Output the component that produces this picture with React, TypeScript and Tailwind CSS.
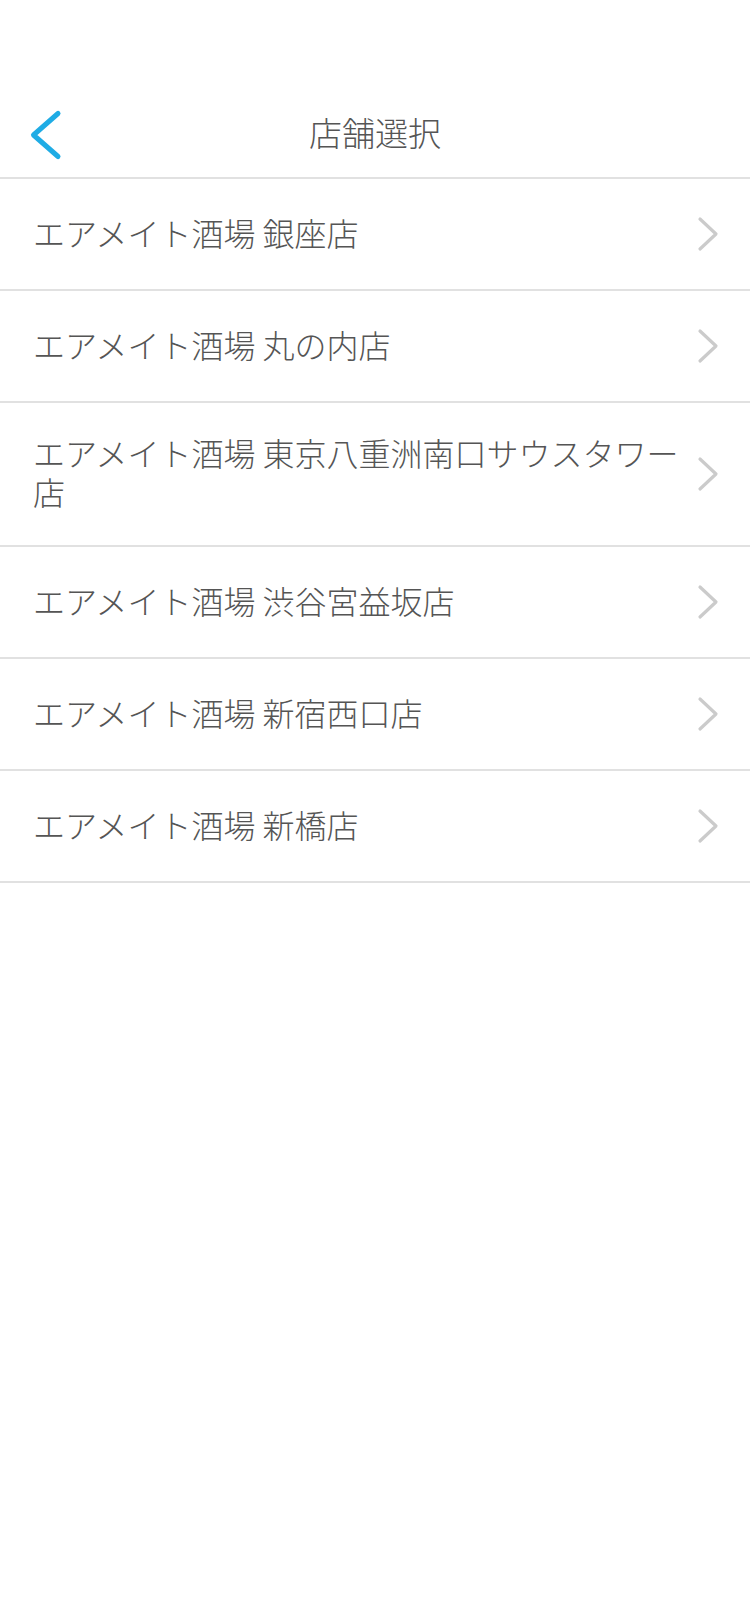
import React from "react";

const stores = [
  "エアメイト酒場 銀座店",
  "エアメイト酒場 丸の内店",
  "エアメイト酒場 東京八重洲南口サウスタワー店",
  "エアメイト酒場 渋谷宮益坂店",
  "エアメイト酒場 新宿西口店",
  "エアメイト酒場 新橋店",
];

function BackIcon() {
  return (
    <svg width="40" height="52" viewBox="0 0 40 52" fill="none">
      <path
        d="M31 4.5 L6.5 26 L31 47.5"
        stroke="#1FACE5"
        strokeWidth={5}
        strokeLinecap="round"
        strokeLinejoin="round"
      />
    </svg>
  );
}

function ChevronIcon() {
  return (
    <svg width="24" height="36" viewBox="0 0 24 36" fill="none">
      <path
        d="M4 3 L20 18 L4 33"
        stroke="#CBCBCB"
        strokeWidth={3.2}
        strokeLinecap="round"
        strokeLinejoin="round"
      />
    </svg>
  );
}

export default function App() {
  return (
    <div
      className="min-h-[1624px] w-[750px] bg-white text-[#555555]"
      style={{ fontFamily: '"Noto Sans CJK JP", "Noto Sans", sans-serif' }}
    >
      {/* Header */}
      <div className="h-[92px]" />
      <div className="relative flex h-[87px] items-center justify-center border-b-2 border-[#e1e1e1] pb-[4px]">
        <button className="absolute left-[27px] top-[17px] flex items-center">
          <BackIcon />
        </button>
        <h1 className="text-[33px] leading-none font-light text-[#555555]">店舗選択</h1>
      </div>

      {/* Store list */}
      <ul>
        {stores.map((name) => (
          <li
            key={name}
            className="flex min-h-[112px] items-center border-b-2 border-[#e1e1e1] pt-[30px] pb-[34px] pl-[33px] pr-[30px]"
          >
            <span className="flex-1 pr-[6px] text-[32px] leading-[39px] font-light">{name}</span>
            <span className="ml-[2px] flex shrink-0 items-center pt-[4px]">
              <ChevronIcon />
            </span>
          </li>
        ))}
      </ul>
    </div>
  );
}
